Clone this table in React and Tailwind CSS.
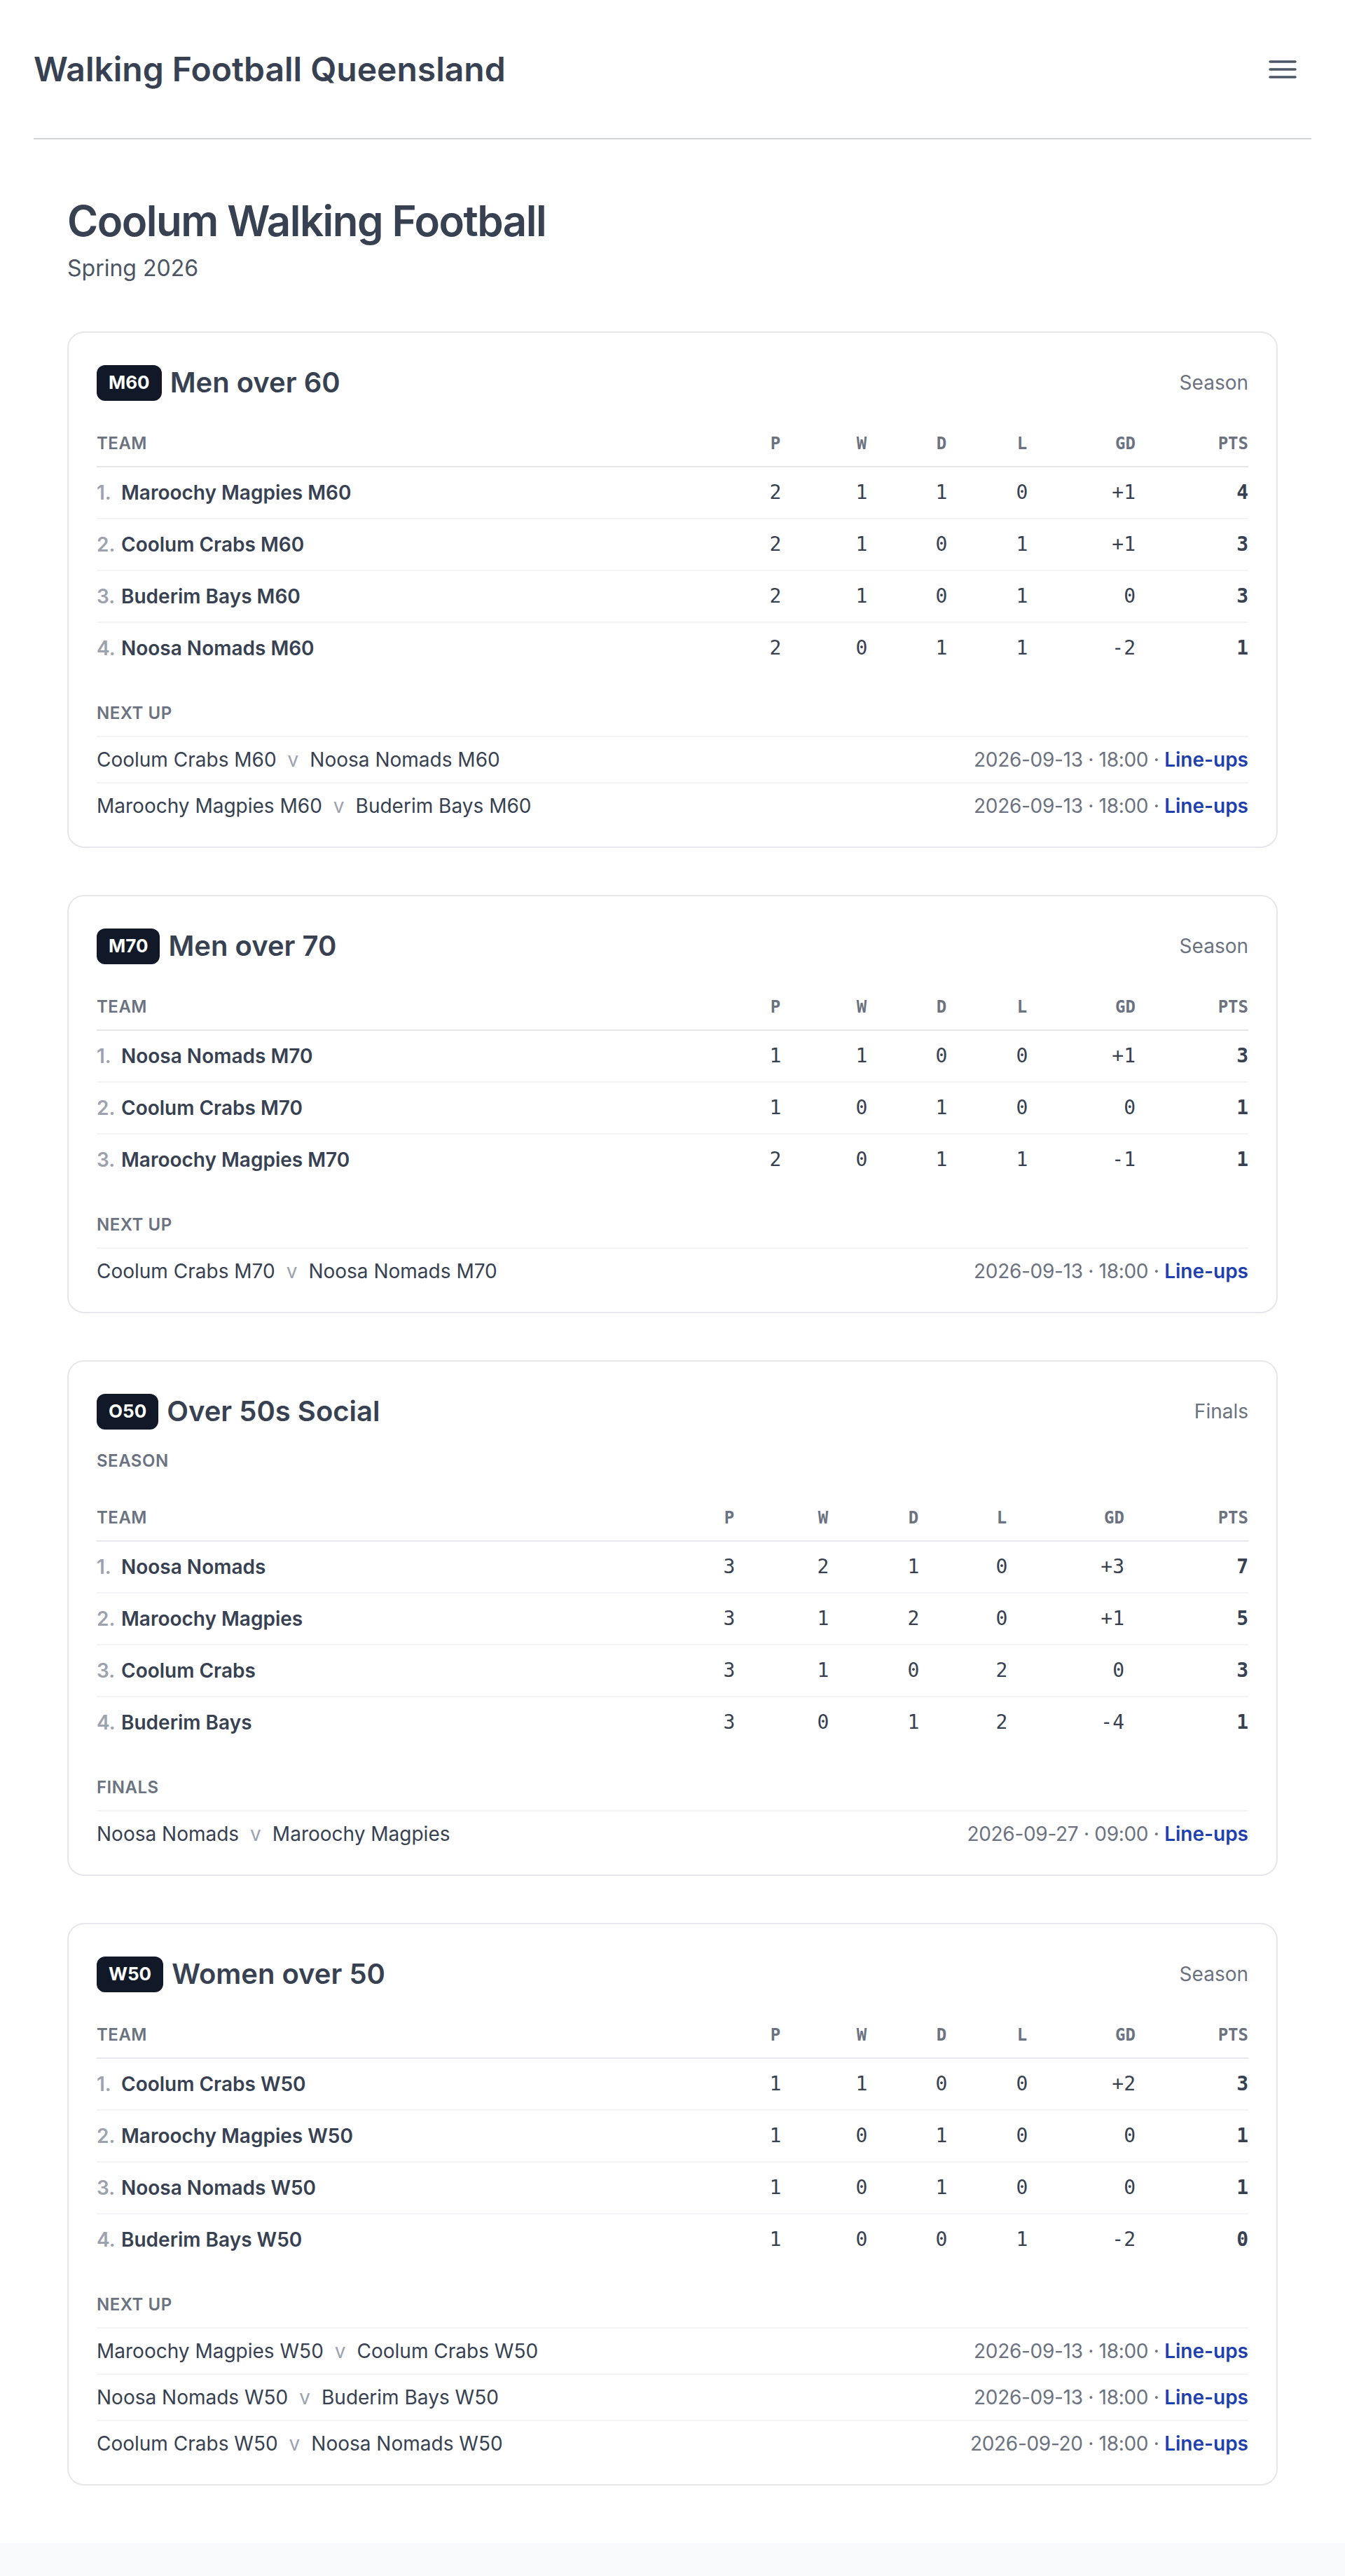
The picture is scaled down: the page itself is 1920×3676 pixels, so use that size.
import React from "react";

const M_COLS = "grid-cols-[1fr_116px_130px_98px_132px_96px_161px]";
const O_COLS = "grid-cols-[1fr_132px_136px_122px_130px_110px_177px]";

const cards = [
  {
    badge: "M60",
    title: "Men over 60",
    right: "Season",
    cols: M_COLS,
    rows: [
      ["Maroochy Magpies M60", 2, 1, 1, 0, "+1", 4],
      ["Coolum Crabs M60", 2, 1, 0, 1, "+1", 3],
      ["Buderim Bays M60", 2, 1, 0, 1, "0", 3],
      ["Noosa Nomads M60", 2, 0, 1, 1, "-2", 1],
    ],
    label: "Next up",
    fixtures: [
      ["Coolum Crabs M60", "Noosa Nomads M60", "2026-09-13 · 18:00"],
      ["Maroochy Magpies M60", "Buderim Bays M60", "2026-09-13 · 18:00"],
    ],
  },
  {
    badge: "M70",
    title: "Men over 70",
    right: "Season",
    cols: M_COLS,
    rows: [
      ["Noosa Nomads M70", 1, 1, 0, 0, "+1", 3],
      ["Coolum Crabs M70", 1, 0, 1, 0, "0", 1],
      ["Maroochy Magpies M70", 2, 0, 1, 1, "-1", 1],
    ],
    label: "Next up",
    fixtures: [["Coolum Crabs M70", "Noosa Nomads M70", "2026-09-13 · 18:00"]],
  },
  {
    badge: "O50",
    title: "Over 50s Social",
    right: "Finals",
    sublabel: "Season",
    cols: O_COLS,
    rows: [
      ["Noosa Nomads", 3, 2, 1, 0, "+3", 7],
      ["Maroochy Magpies", 3, 1, 2, 0, "+1", 5],
      ["Coolum Crabs", 3, 1, 0, 2, "0", 3],
      ["Buderim Bays", 3, 0, 1, 2, "-4", 1],
    ],
    label: "Finals",
    fixtures: [["Noosa Nomads", "Maroochy Magpies", "2026-09-27 · 09:00"]],
  },
  {
    badge: "W50",
    title: "Women over 50",
    right: "Season",
    cols: M_COLS,
    rows: [
      ["Coolum Crabs W50", 1, 1, 0, 0, "+2", 3],
      ["Maroochy Magpies W50", 1, 0, 1, 0, "0", 1],
      ["Noosa Nomads W50", 1, 0, 1, 0, "0", 1],
      ["Buderim Bays W50", 1, 0, 0, 1, "-2", 0],
    ],
    label: "Next up",
    fixtures: [
      ["Maroochy Magpies W50", "Coolum Crabs W50", "2026-09-13 · 18:00"],
      ["Noosa Nomads W50", "Buderim Bays W50", "2026-09-13 · 18:00"],
      ["Coolum Crabs W50", "Noosa Nomads W50", "2026-09-20 · 18:00"],
    ],
  },
];

const MONO = "font-['DejaVu_Sans_Mono',monospace]";

function Card({ c }) {
  return (
    <section className="rounded-[24px] border-2 border-[#e5e7eb] bg-white px-[40px] pt-[40px] pb-[26px]">
      <div className="flex h-[62px] items-center justify-between">
        <div className="flex items-center gap-[12px]">
          <span className="flex h-[51px] items-center rounded-[12px] bg-[#111827] px-[17px] text-[26px] font-bold leading-none text-white">
            {c.badge}
          </span>
          <h2 className="text-[40px] font-semibold leading-none text-[#374151]">{c.title}</h2>
        </div>
        <span className="text-[28px] leading-none text-[#6b7280]">{c.right}</span>
      </div>

      {c.sublabel && (
        <div className="mt-[24px] h-[32px] text-[24px] font-semibold uppercase leading-[32px] tracking-[0.5px] text-[#6b7280]">
          {c.sublabel}
        </div>
      )}

      <div className={c.sublabel ? "mt-[33px]" : "mt-[24px]"}>
        <div className={`grid ${c.cols} h-[66px] items-center border-b-2 border-[#e5e7eb] text-[24px] text-[#6b7280]`}>
          <span className="font-semibold uppercase tracking-[0.5px]">Team</span>
          <span className={`${MONO} text-center font-bold`}>P</span>
          <span className={`${MONO} text-center font-bold`}>W</span>
          <span className={`${MONO} text-center font-bold`}>D</span>
          <span className={`${MONO} text-center font-bold`}>L</span>
          <span className={`${MONO} text-right font-bold`}>GD</span>
          <span className={`${MONO} text-right font-bold`}>PTS</span>
        </div>
        {c.rows.map((r, i) => (
          <div
            key={i}
            className={`grid ${c.cols} items-center text-[28px] text-[#374151] ${
              i < c.rows.length - 1 ? "h-[74px] border-b-2 border-[#f3f4f6]" : "h-[72px]"
            }`}
          >
            <span className="flex items-baseline font-semibold">
              <span className="mr-[9px] inline-block w-[26px] text-[#9ca3af]">{i + 1}.</span>
              <span>{r[0]}</span>
            </span>
            <span className={`${MONO} text-center`}>{r[1]}</span>
            <span className={`${MONO} text-center`}>{r[2]}</span>
            <span className={`${MONO} text-center`}>{r[3]}</span>
            <span className={`${MONO} text-center`}>{r[4]}</span>
            <span className={`${MONO} text-right`}>{r[5]}</span>
            <span className={`${MONO} text-right font-bold`}>{r[6]}</span>
          </div>
        ))}
      </div>

      <div className="mt-[41px] h-[32px] text-[24px] font-semibold uppercase leading-[32px] tracking-[0.5px] text-[#6b7280]">
        {c.label}
      </div>
      <div className="mt-[16px]">
        {c.fixtures.map((f, i) => (
          <div
            key={i}
            className="flex h-[66px] items-center justify-between border-t-2 border-[#f3f4f6] text-[28px]"
          >
            <span className="text-[#374151]">
              {f[0]}
              <span className="px-[16px] text-[#9ca3af]">v</span>
              {f[1]}
            </span>
            <span className="tracking-[-0.3px] text-[#6b7280]">
              {f[2]} · <a className="font-semibold tracking-normal text-[#1e40af]">Line-ups</a>
            </span>
          </div>
        ))}
      </div>
    </section>
  );
}

export default function App() {
  return (
    <div className="min-h-screen bg-white font-['Inter',sans-serif]">
      <header className="mx-[48px] flex h-[199px] items-center justify-between border-b-2 border-[#d1d5db]">
        <div className="text-[48px] font-semibold text-[#374151]">Walking Football Queensland</div>
        <button className="mr-[21px] text-[#4b5563]" aria-label="Menu">
          <svg width="40" height="28" viewBox="0 0 40 28" fill="none" stroke="currentColor" strokeWidth="3.5" strokeLinecap="round">
            <line x1="2" y1="3" x2="38" y2="3" />
            <line x1="2" y1="14" x2="38" y2="14" />
            <line x1="2" y1="25" x2="38" y2="25" />
          </svg>
        </button>
      </header>
      <main className="px-[96px] pt-[80px] pb-[82px]">
        <h1 className="text-[60px] font-semibold leading-[72px] tracking-[-1.5px] text-[#374151]">Coolum Walking Football</h1>
        <p className="mt-[12px] text-[32px] leading-[40px] text-[#4b5563]">Spring 2026</p>
        <div className="mt-[70px] flex flex-col gap-[67px]">
          {cards.map((c) => (
            <Card key={c.badge} c={c} />
          ))}
        </div>
      </main>
      <div className="h-[48px] bg-[#f9fafb]" />
    </div>
  );
}
